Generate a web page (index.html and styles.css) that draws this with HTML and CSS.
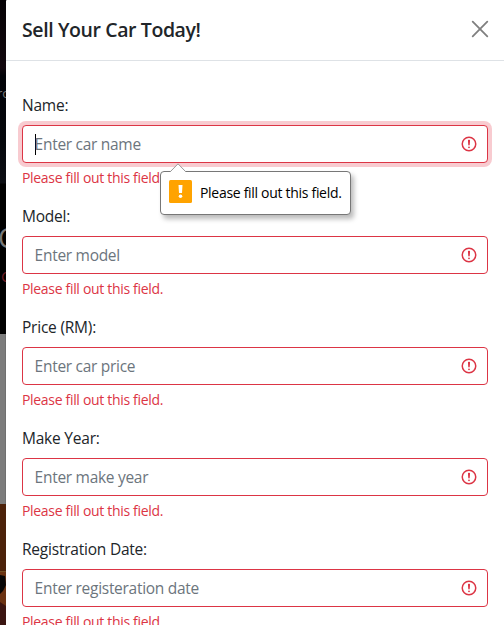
FILE: index.html
```html
<!DOCTYPE html>
<html lang="en">
<head>
<meta charset="utf-8">
<title>Sell Your Car Today!</title>
<link rel="stylesheet" href="styles.css">
</head>
<body>
<svg class="defs" width="0" height="0" aria-hidden="true">
  <symbol id="alert" viewBox="0 0 12 12">
    <circle cx="6" cy="6" r="4.5" fill="none" stroke="#dc3545"/>
    <path d="M5.8 3.6h.4L6 6.5z" fill="#dc3545" stroke="#dc3545" stroke-linejoin="round"/>
    <circle cx="6" cy="8.2" r=".6" fill="#dc3545"/>
  </symbol>
</svg>
<div class="page">
  <div class="backdrop">
    <div class="hero">
      <span class="hero-nav">ro</span>
      <span class="hero-title">C</span>
      <span class="hero-sub">C</span>
    </div>
    <div class="band"></div>
    <svg class="photo" viewBox="0 0 6 121" preserveAspectRatio="none">
      <path d="M0 0h6v121H0z" fill="#4c220a"/>
      <path d="M0 67h6v54H0z" fill="#6b3313"/>
      <path d="M0 67h6v1H0z" fill="#725024"/>
      <path d="M0 71l5 1 1 9-3 6-3 3z" fill="#080606"/>
      <path d="M0 98l6 4v19H0z" fill="#3b1511"/>
    </svg>
  </div>
  <main class="modal">
    <header class="modal-header">
      <h5 class="modal-title">Sell Your Car Today!</h5>
      <svg class="close" viewBox="0 0 16 16"><path d="M.7 .7l14.6 14.6M15.3 .7l-14.6 14.6"/></svg>
    </header>
    <form class="modal-body">
      <div class="field">
        <label class="label">Name:</label>
        <div class="control focused"><i class="caret"></i><span class="placeholder">Enter car name</span><svg class="icon"><use href="#alert"/></svg></div>
        <div class="feedback"><span>Please fill out this field.</span></div>
        <div class="tooltip">
          <svg class="arrow" viewBox="0 0 18 9"><path d="M1 9L9 .8 17 9" fill="#fff" stroke="#999"/></svg>
          <svg class="warning" viewBox="0 0 23 23"><rect width="23" height="23" rx="1.5" fill="#ffa300"/><path d="M9.5 5h4l-.5 8h-3z" fill="#fff"/><circle cx="11.5" cy="16.3" r="1.8" fill="#fff"/></svg>
          <span class="tooltip-text">Please fill out this field.</span>
        </div>
      </div>
      <div class="field">
        <label class="label">Model:</label>
        <div class="control"><span class="placeholder">Enter model</span><svg class="icon"><use href="#alert"/></svg></div>
        <div class="feedback"><span>Please fill out this field.</span></div>
      </div>
      <div class="field">
        <label class="label">Price (RM):</label>
        <div class="control"><span class="placeholder">Enter car price</span><svg class="icon"><use href="#alert"/></svg></div>
        <div class="feedback"><span>Please fill out this field.</span></div>
      </div>
      <div class="field">
        <label class="label">Make Year:</label>
        <div class="control"><span class="placeholder">Enter make year</span><svg class="icon"><use href="#alert"/></svg></div>
        <div class="feedback"><span>Please fill out this field.</span></div>
      </div>
      <div class="field">
        <label class="label">Registration Date:</label>
        <div class="control"><span class="placeholder">Enter registeration date</span><svg class="icon"><use href="#alert"/></svg></div>
        <div class="feedback"><span>Please fill out this field.</span></div>
      </div>
    </form>
  </main>
</div>
</body>
</html>
```
FILE: styles.css
```css
* { box-sizing: border-box; }
body {
  margin: 0;
  overflow: hidden;
  background: #000;
  color: #212529;
  font: 15.5px/24px "Open Sans", "Noto Sans", sans-serif;
}
.defs { position: absolute; }
.page { display: flex; height: 625px; overflow: hidden; }

.backdrop { flex: 0 0 6px; overflow: hidden; display: flex; flex-direction: column; }
.hero {
  flex: 0 0 334px;
  display: flex;
  flex-direction: column;
  background: linear-gradient(#050205 0, #12080e 68px, #020308 76px, #05070c 140px, #0c0e13 183px, #000 184px);
}
.hero-nav { margin: 83px 0 0 -3px; font-size: 13px; line-height: 20px; color: #777; }
.hero-title { margin: 115px 0 0 -2px; font-size: 27px; line-height: 40px; color: #777; }
.hero-sub { margin: 8px 0 0 1px; font-size: 15px; line-height: 20px; color: #6e1b23; }
.band { flex: 0 0 170px; background: #7c7c7c; border-right: 1px solid #707070; }
.photo { flex: 0 0 121px; width: 6px; height: 121px; }

.modal { flex: 0 0 498px; background: #fff; border-top-left-radius: 1px; }
.modal-header {
  display: flex;
  align-items: center;
  justify-content: space-between;
  height: 61px;
  padding: 0 16px;
  border-bottom: 1px solid #dee2e6;
}
.modal-title { margin: 0; font-size: 19.5px; line-height: 30px; font-weight: 600; letter-spacing: -0.4px; }
.close { width: 16px; height: 16px; margin: -3px 0 0; fill: none; stroke: #7f7f7f; stroke-width: 1.8; stroke-linecap: round; overflow: visible; }

.modal-body { margin: 0; padding: 32px 16px 0; }
.field { position: relative; margin-bottom: 16px; }
.label { display: block; height: 24px; margin-bottom: 8px; letter-spacing: -0.22px; }
.control {
  display: flex;
  align-items: center;
  height: 38px;
  padding: 0 9px 0 12px;
  border: 1px solid #dc3545;
  border-radius: 4px;
  background: #fff;
}
.focused { box-shadow: 0 0 0 4px #f8cbd0; }
.caret { width: 1px; height: 21px; margin-right: -1px; background: #000; }
.placeholder { flex: 1; margin-left: -0.4px; color: #6c757d; letter-spacing: -0.29px; }
.icon { width: 18px; height: 18px; }
.feedback { margin-top: 4px; font-size: 14px; line-height: 21px; color: #dc3545; letter-spacing: -0.32px; }

.tooltip {
  position: absolute;
  left: 138px;
  top: 78px;
  display: flex;
  align-items: center;
  width: 191px;
  height: 44px;
  padding: 0 8px;
  border: 1px solid #777;
  border-radius: 4px;
  background: #fff;
  box-shadow: 3px 4px 5px rgba(0, 0, 0, .27);
}
.arrow { position: absolute; left: 8px; top: -9px; width: 18px; height: 9px; }
.warning { width: 23px; height: 23px; margin: -3px 8px 0 0; }
.tooltip-text { font-size: 14px; line-height: 20px; color: #000; letter-spacing: -0.3px; white-space: nowrap; }
```
